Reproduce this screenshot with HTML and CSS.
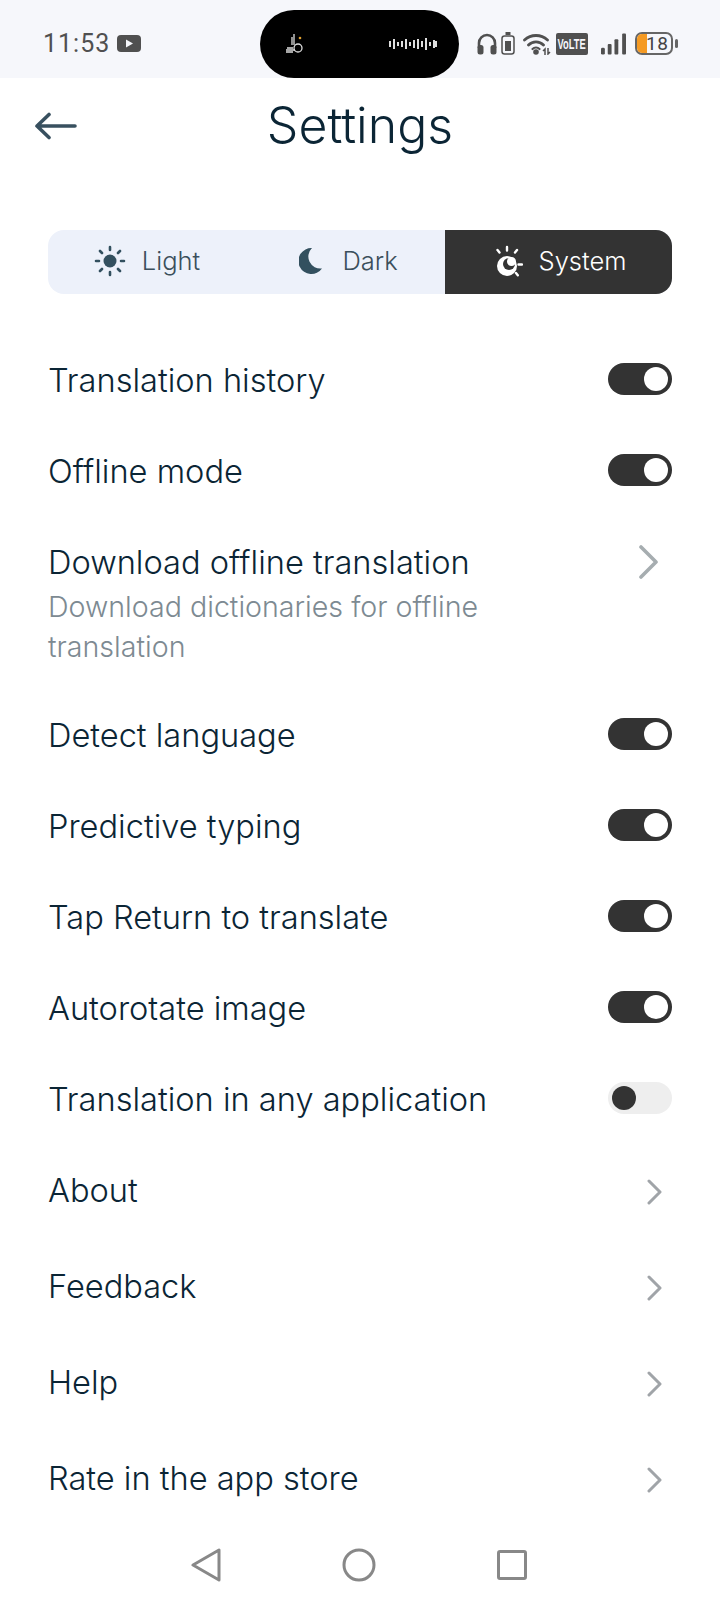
FILE: index.html
```html
<!DOCTYPE html>
<html lang="en">
<head>
    <meta charset="UTF-8">
    <meta name="viewport" content="width=device-width, initial-scale=1.0">
    <title>Settings</title>
    <link rel="stylesheet" href="styles.css">
</head>
<body>
    <div class="status-bar">
        <div class="status-left">
            <span class="time">11:53</span>
            <svg width="24" height="17" viewBox="0 0 24 17"><rect width="24" height="17" rx="4" fill="#505050"/><path d="M9 4.500 L16 8.500 L9 12.500Z" fill="#f6f7fb"/></svg>
        </div>
        <div class="island">
            <svg width="18" height="22" viewBox="0 0 18 22" fill="none" stroke="#ddd" stroke-width="1.300"><circle cx="13" cy="15" r="4"/><path d="M9 1v11M7 4v8M1 17h9M1 19h7M2 15h6"/><circle cx="15" cy="5" r="1.300" fill="#e0a030" stroke="none"/></svg>
            <svg width="48" height="12" viewBox="0 0 48 12" stroke="#ddd" stroke-width="2"><path d="M1 3v6M5 1v10M9 4v4M13 3v6M17 1v10M21 4v4M25 2v8M29 1v10M33 3v6M37 0v12M41 4v4M45 2v8M47 3v6"/></svg>
        </div>
        <div class="status-right">
            <svg width="20" height="22" viewBox="0 0 20 22" fill="none" stroke="#505050" stroke-width="2.600"><path d="M2 15V10a8 8 0 0 1 16 0v5"/><rect x="0.500" y="12" width="6" height="9.500" rx="2.500" fill="#505050" stroke="none"/><rect x="13.500" y="12" width="6" height="9.500" rx="2.500" fill="#505050" stroke="none"/></svg>
            <svg width="14" height="23" viewBox="0 0 14 23" fill="none" stroke="#505050" stroke-width="1.500"><rect x="1" y="4" width="12" height="18" rx="2.500"/><rect x="4" y="9" width="6" height="10" fill="#505050" stroke="none"/><rect x="4.500" y="0" width="5" height="3" fill="#505050" stroke="none"/></svg>
            <svg class="wifi" width="28" height="22" viewBox="0 0 28 22" fill="none" stroke="#505050" stroke-width="2.800" stroke-linecap="round"><path d="M1.500 7a17 17 0 0 1 23 0M5.500 12a10.500 10.500 0 0 1 15 0"/><circle cx="13" cy="19" r="2.800" fill="#505050" stroke="none"/><path d="M9.500 16a5 5 0 0 1 7 0" stroke-width="2.200"/><path d="M22 22v-6l-2 2M25 15v6l2-2" stroke-width="1.500" stroke-linecap="butt"/></svg>
            <span class="volte"><span class="volte-text">VoLTE</span></span>
            <svg class="signal" width="25" height="22" viewBox="0 0 26 22" fill="#505050"><rect x="0" y="15" width="4" height="7" rx="1.500"/><rect x="7" y="11" width="4" height="11" rx="1"/><rect x="14" y="6" width="4" height="16" rx="1"/><rect x="22" y="0" width="4" height="22" rx="1"/></svg>
            <div class="battery">
                <div class="battery-body"><span class="battery-fill"></span><span class="battery-num">18</span></div>
                <span class="battery-cap"></span>
            </div>
        </div>
    </div>

    <div class="header">
        <svg class="back" width="44" height="28" viewBox="0 0 44 28" fill="none" stroke="#38505f" stroke-width="3.600" stroke-linecap="round" stroke-linejoin="round"><path d="M2 14H40M14 2.500L2 14L14 25.500"/></svg>
        <h1>Settings</h1>
    </div>

    <div class="segments">
        <div class="segment segment-light">
            <svg width="32" height="32" viewBox="0 0 32 32" fill="#33505f" stroke="#33505f" stroke-width="2.600" stroke-linecap="round"><circle cx="16" cy="16" r="6.500" stroke="none"/><path d="M16 2v3M16 27v3M2 16h3M27 16h3M6 6l2 2M24 24l2 2M6 26l2-2M24 8l2-2"/></svg>
            <span>Light</span>
        </div>
        <div class="segment segment-dark">
            <svg width="24" height="28" viewBox="0 0 24 28"><path d="M13 1A13 13 0 1 0 23 21.500A12 12 0 0 1 13 1Z" fill="#33505f"/></svg>
            <span>Dark</span>
        </div>
        <div class="segment segment-system">
            <svg width="32" height="32" viewBox="10 8 32 32" fill="none" stroke="#fff" stroke-width="2.400" stroke-linecap="round"><path d="M26 10v3.500M16.500 13l2 2.500M36 13l-2 2.500M37.500 27.500h3.500M35 36l1.800 2.200"/><circle cx="26" cy="29" r="10" fill="#fff" stroke="none"/><circle cx="28" cy="27" r="6" fill="#333" stroke="none"/><circle cx="30.500" cy="24.500" r="4.500" fill="#fff" stroke="none"/></svg>
            <span>System</span>
        </div>
    </div>

    <div class="settings">
        <div class="row"><span class="label">Translation history</span><span class="toggle on"></span></div>
        <div class="row"><span class="label">Offline mode</span><span class="toggle on"></span></div>
        <div class="row row-tall">
            <div class="row-text">
                <span class="label">Download offline translation</span>
                <span class="sub">Download dictionaries for offline translation</span>
            </div>
            <svg class="chevron-big" width="19" height="34" viewBox="0 0 19 34" fill="none" stroke="#a6adb0" stroke-width="3.600" stroke-linecap="round" stroke-linejoin="round"><path d="M2 2L17 17L2 32"/></svg>
        </div>
        <div class="row"><span class="label">Detect language</span><span class="toggle on"></span></div>
        <div class="row"><span class="label">Predictive typing</span><span class="toggle on"></span></div>
        <div class="row"><span class="label">Tap Return to translate</span><span class="toggle on"></span></div>
        <div class="row"><span class="label">Autorotate image</span><span class="toggle on"></span></div>
        <div class="row"><span class="label">Translation in any application</span><span class="toggle"></span></div>
        <div class="links">
            <div class="row"><span class="label">About</span><svg class="chevron" width="15" height="26" viewBox="0 0 15 26" fill="none" stroke="#a0a4a8" stroke-width="3" stroke-linecap="round" stroke-linejoin="round"><path d="M2 2L13 13L2 24"/></svg></div>
            <div class="row"><span class="label">Feedback</span><svg class="chevron" width="15" height="26" viewBox="0 0 15 26" fill="none" stroke="#a0a4a8" stroke-width="3" stroke-linecap="round" stroke-linejoin="round"><path d="M2 2L13 13L2 24"/></svg></div>
            <div class="row"><span class="label">Help</span><svg class="chevron" width="15" height="26" viewBox="0 0 15 26" fill="none" stroke="#a0a4a8" stroke-width="3" stroke-linecap="round" stroke-linejoin="round"><path d="M2 2L13 13L2 24"/></svg></div>
            <div class="row"><span class="label">Rate in the app store</span><svg class="chevron" width="15" height="26" viewBox="0 0 15 26" fill="none" stroke="#a0a4a8" stroke-width="3" stroke-linecap="round" stroke-linejoin="round"><path d="M2 2L13 13L2 24"/></svg></div>
        </div>
    </div>

    <div class="nav-bar">
        <svg width="30" height="34" viewBox="0 0 30 34" fill="none" stroke="#888" stroke-width="3" stroke-linejoin="round"><path d="M28 2V32L2 17Z"/></svg>
        <svg width="34" height="34" viewBox="0 0 34 34" fill="none" stroke="#888" stroke-width="3"><circle cx="17" cy="17" r="15"/></svg>
        <svg width="30" height="30" viewBox="0 0 30 30" fill="none" stroke="#888" stroke-width="3" stroke-linejoin="round"><rect x="1.500" y="1.500" width="27" height="27" rx="1.500"/></svg>
    </div>
</body>
</html>
```

FILE: styles.css
```css
* {
    box-sizing: border-box;
}
body {
    margin: 0;
    width: 720px;
    height: 1604px;
    overflow: hidden;
    background: #fff;
    color: #0b2535;
    font-family: Inter, "Noto Sans", sans-serif;
    font-weight: 350;
}
.status-bar {
    display: flex;
    align-items: flex-start;
    height: 78px;
    background: #f6f7fb;
    padding: 10px 0 0 43px;
}
.status-left {
    display: flex;
    align-items: center;
    gap: 7px;
    width: 217px;
    height: 67px;
}
.time {
    font-family: Roboto, sans-serif;
    font-size: 25px;
    font-weight: 400;
    letter-spacing: 1px;
    color: #505050;
}
.island {
    display: flex;
    align-items: center;
    justify-content: space-between;
    width: 199px;
    height: 68px;
    padding: 0 22px 0 25px;
    background: #000;
    border-radius: 34px;
}
.status-right {
    display: flex;
    align-items: center;
    height: 67px;
    margin-left: 18px;
    gap: 4px;
}
.wifi {
    margin-left: 4px;
}
.volte {
    display: flex;
    align-items: center;
    justify-content: center;
    width: 32px;
    height: 22px;
    margin-left: 1px;
    background: #505050;
    border-radius: 2px;
    color: #f6f7fb;
}
.volte-text {
    font-family: "Liberation Sans", sans-serif;
    font-size: 15px;
    font-weight: bold;
    transform: scaleX(0.62);
}
.signal {
    margin-left: 9px;
}
.battery {
    display: flex;
    align-items: center;
    gap: 2px;
    margin-left: 5px;
}
.battery-body {
    position: relative;
    width: 38px;
    height: 23px;
    border: 2px solid #666;
    border-radius: 7px;
    overflow: hidden;
}
.battery-fill {
    position: absolute;
    left: 0;
    top: 0;
    bottom: 0;
    width: 10px;
    background: #f59a23;
}
.battery-num {
    position: absolute;
    left: 9px;
    top: 0;
    font-family: Roboto, sans-serif;
    font-size: 19px;
    font-weight: 400;
    line-height: 19px;
    color: #444;
    letter-spacing: 0.5px;
}
.battery-cap {
    width: 3px;
    height: 9px;
    background: #666;
    border-radius: 2px;
}
.header {
    position: relative;
    height: 94px;
    display: flex;
    align-items: center;
    justify-content: center;
}
.header h1 {
    margin: 0;
    font-size: 50px;
    font-weight: 300;
    line-height: 94px;
}
.back {
    position: absolute;
    left: 35px;
    top: 34px;
}
.segments {
    display: flex;
    height: 64px;
    margin: 58px 48px 0;
    border-radius: 16px;
    background: #edf1fa;
    overflow: hidden;
}
.segment {
    display: flex;
    align-items: center;
    justify-content: center;
    gap: 16px;
    padding-bottom: 2px;
    font-size: 25.5px;
    color: #3b4f5c;
}
.segment span {
    padding-bottom: 2px;
}
.segment-light {
    width: 198px;
}
.segment-dark {
    width: 199px;
    gap: 19px;
    padding-left: 6px;
}
.segment-system {
    width: 227px;
    background: #333;
    color: #fff;
}
.settings {
    margin-top: 39px;
    padding: 0 48px;
}
.row {
    display: flex;
    align-items: center;
    justify-content: space-between;
    height: 91px;
}
.row-tall {
    height: 173px;
    align-items: flex-start;
    padding-top: 22px;
}
.row-text {
    display: flex;
    flex-direction: column;
    width: 480px;
}
.label {
    padding-top: 2px;
    font-size: 32.6px;
    line-height: 46px;
}
.sub {
    margin-top: 2px;
    font-size: 28.6px;
    line-height: 40px;
    color: #7d8a92;
}
.toggle {
    display: flex;
    align-items: center;
    justify-content: flex-start;
    width: 64px;
    height: 32px;
    padding: 0 4px;
    background: #eee;
    border-radius: 16px;
}
.toggle::after {
    content: "";
    width: 24px;
    height: 24px;
    background: #333;
    border-radius: 50%;
}
.toggle.on {
    justify-content: flex-end;
    background: #333;
}
.toggle.on::after {
    background: #fff;
}
.chevron-big {
    margin: 8px 14px 0 0;
}
.chevron {
    margin: 6px 10px 0 0;
}
.links {
    display: flex;
    flex-direction: column;
    gap: 5px;
}
.nav-bar {
    position: absolute;
    left: 0;
    right: 0;
    top: 1548px;
    display: flex;
    align-items: center;
    justify-content: center;
    gap: 121px;
    padding-right: 2px;
}
```
